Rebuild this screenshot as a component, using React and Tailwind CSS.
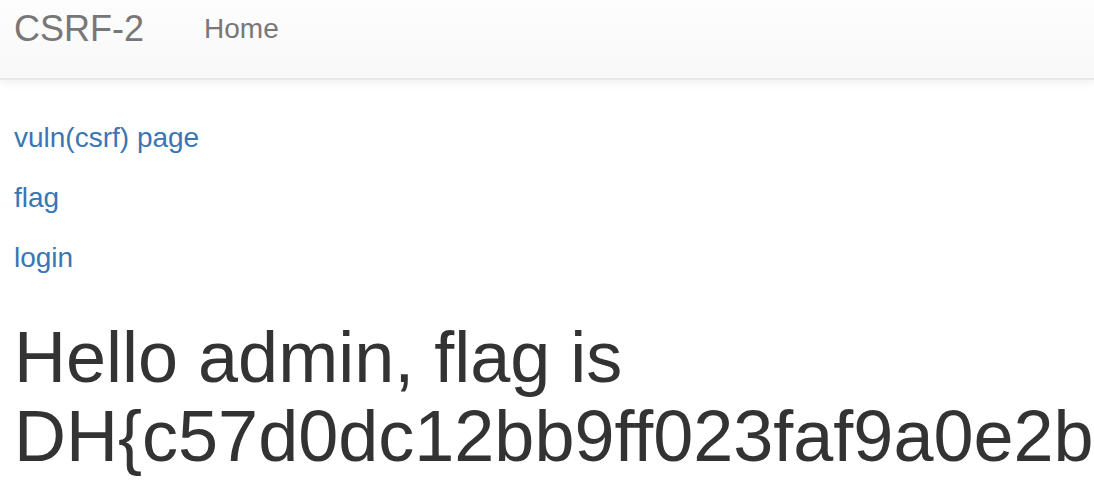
export default function App() {
  const links = ["vuln(csrf) page", "flag", "login"];

  return (
    <div className="w-screen h-screen overflow-hidden bg-white font-['Liberation_Sans',Arial,sans-serif]">
      {/* NAVBAR */}
      <nav className="h-[80px] flex items-center px-[14px] pb-[20px] bg-gradient-to-b from-[#fdfdfd] to-[#f8f8f8] border-b-2 border-[#e7e7e7] shadow-[0_2px_10px_rgba(0,0,0,0.075)]">
        <a className="text-[36px] leading-[40px] text-[#777777]">CSRF-2</a>
        <a className="ml-[60px] text-[28px] leading-[40px] text-[#777777]">Home</a>
      </nav>

      {/* CONTENT */}
      <main className="px-[14px] pt-[38px]">
        {links.map((l) => (
          <p key={l} className="mb-[20px]">
            <a className="text-[28px] leading-[40px] text-[#3a76b3]">{l}</a>
          </p>
        ))}
        <h1 className="mt-[40px] text-[72px] leading-[79px] text-[#333333] whitespace-nowrap">
          Hello admin, flag is
          <br />
          DH{"{c57d0dc12bb9ff023faf9a0e2b8c1d4e}"}
        </h1>
      </main>
    </div>
  );
}
